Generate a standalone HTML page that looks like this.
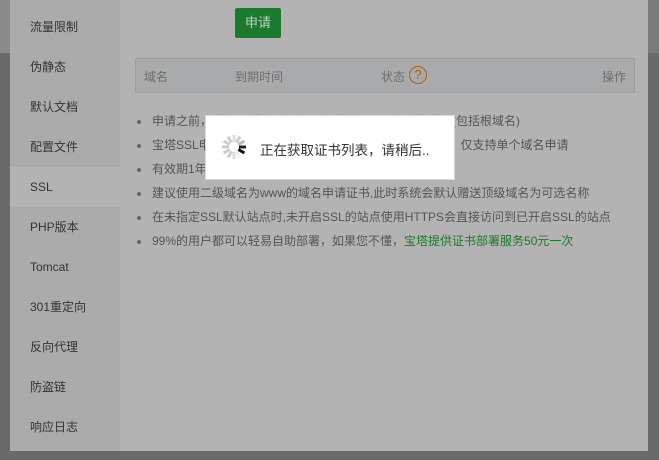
<!DOCTYPE html>
<html><head><meta charset="utf-8"><style>
*{margin:0;padding:0;box-sizing:border-box}
body{width:659px;height:460px;background:#6a6a6a;position:relative;overflow:hidden;font-family:"Liberation Sans","Noto Sans CJK SC",sans-serif;font-size:12px}
.tl{position:absolute;left:0;top:0;width:10px;height:53px;background:#8a8a8a}
.tr{position:absolute;right:0;top:0;width:11px;height:53px;background:#7a7a7a}
.modal{position:absolute;left:10px;top:0;width:638px;height:451px;background:#b3b3b3}
.side{position:absolute;left:0;top:0;width:110px;height:451px;background:#ababab}
.item{position:absolute;left:0;width:110px;height:40px;line-height:40px;padding-left:20px;color:#333;font-size:12px}
.item.on{background:#b3b3b3}
.btn{position:absolute;left:225px;top:8px;width:46px;height:30px;background:#1b7a2e;border-radius:2px;color:#b8d4bd;text-align:center;line-height:30px;font-size:13px}
.th{position:absolute;left:125px;top:58px;width:500px;height:35px;background:#a9aaab;border:1px solid #9d9e9f;color:#6e6e6e}
.th span{position:absolute;top:9px}
.q{position:absolute;left:273px;top:7px;width:18px;height:18px;border:1.5px solid #b4600a;border-radius:50%;color:#b4600a;text-align:center;line-height:15px;font-size:13px}
ul{position:absolute;left:127px;top:109px;list-style:none;color:#555}
li{height:24px;line-height:24px;white-space:nowrap;position:relative;padding-left:15px}
li:before{content:"";position:absolute;left:0;top:11px;width:4px;height:4px;border-radius:50%;background:#666}
.g{color:#1a7a2a}
.load{position:absolute;left:205px;top:115px;width:250px;height:65px;background:#fff;border:1px solid #d8d8d8}
.load .t{position:absolute;left:54px;top:23px;font-size:13.5px;color:#333}
</style></head><body>
<div class="tl"></div><div class="tr"></div>
<div class="modal">
<div class="side">
<div class="item" style="top:7px">流量限制</div>
<div class="item" style="top:47px">伪静态</div>
<div class="item" style="top:87px">默认文档</div>
<div class="item" style="top:127px">配置文件</div>
<div class="item on" style="top:167px">SSL</div>
<div class="item" style="top:207px">PHP版本</div>
<div class="item" style="top:247px">Tomcat</div>
<div class="item" style="top:287px">301重定向</div>
<div class="item" style="top:327px">反向代理</div>
<div class="item" style="top:367px">防盗链</div>
<div class="item" style="top:407px">响应日志</div>
</div>
<div class="btn">申请</div>
<div class="th"><span style="left:8px">域名</span><span style="left:99px">到期时间</span><span style="left:245px">状态</span><div class="q">?</div><span style="right:8px">操作</span></div>
<ul>
<li>申请之前，请确保域名已解析，如未解析会导致审核失败(包括根域名)</li>
<li>宝塔SSL申请的是免费版TrustAsia DV SSL CA - G5证书，仅支持单个域名申请</li>
<li>有效期1年，不支持续签，到期后需要重新申请</li>
<li>建议使用二级域名为www的域名申请证书,此时系统会默认赠送顶级域名为可选名称</li>
<li>在未指定SSL默认站点时,未开启SSL的站点使用HTTPS会直接访问到已开启SSL的站点</li>
<li>99%的用户都可以轻易自助部署，如果您不懂，<span class="g">宝塔提供证书部署服务50元一次</span></li>
</ul>
</div>
<div class="load">
<svg style="position:absolute;left:13px;top:16px" width="30" height="30" viewBox="-15 -15 30 30">
<g stroke-width="3" stroke-linecap="butt">
<line x1="0" y1="-5" x2="0" y2="-12" stroke="#ddd" transform="rotate(0)"/>
<line x1="0" y1="-5" x2="0" y2="-12" stroke="#ccc" transform="rotate(30)"/>
<line x1="0" y1="-5" x2="0" y2="-12" stroke="#bbb" transform="rotate(60)"/>
<line x1="0" y1="-5" x2="0" y2="-12" stroke="#222" transform="rotate(90)"/>
<line x1="0" y1="-5" x2="0" y2="-12" stroke="#111" transform="rotate(120)"/>
<line x1="0" y1="-5" x2="0" y2="-12" stroke="#eee" transform="rotate(150)"/>
<line x1="0" y1="-5" x2="0" y2="-12" stroke="#ddd" transform="rotate(180)"/>
<line x1="0" y1="-5" x2="0" y2="-12" stroke="#ccc" transform="rotate(210)"/>
<line x1="0" y1="-5" x2="0" y2="-12" stroke="#ccc" transform="rotate(240)"/>
<line x1="0" y1="-5" x2="0" y2="-12" stroke="#ccc" transform="rotate(270)"/>
<line x1="0" y1="-5" x2="0" y2="-12" stroke="#ccc" transform="rotate(300)"/>
<line x1="0" y1="-5" x2="0" y2="-12" stroke="#ccc" transform="rotate(330)"/>
</g></svg>
<div class="t">正在获取证书列表，请稍后..</div>
</div>
</body></html>
